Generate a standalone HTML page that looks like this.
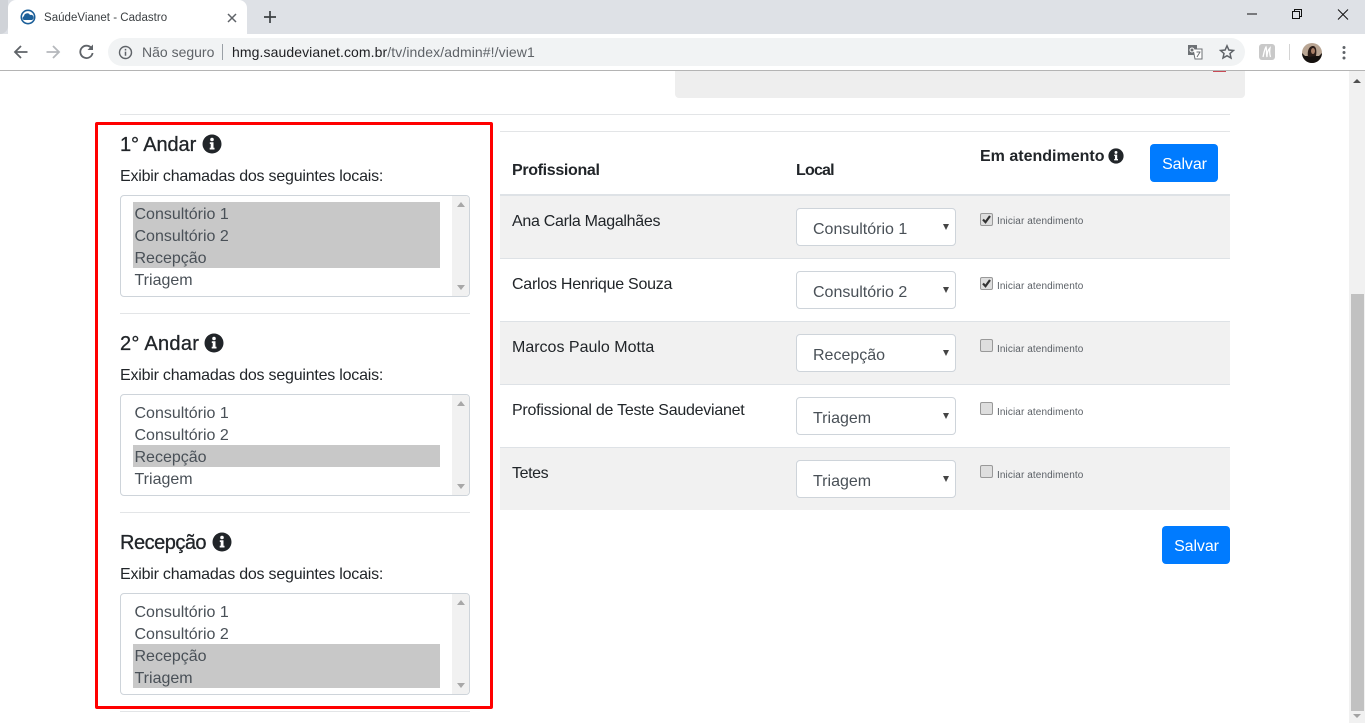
<!DOCTYPE html>
<html lang="pt-BR"><head><meta charset="utf-8"><title>SaúdeVianet - Cadastro</title>
<style>
html,body{margin:0;padding:0;width:1365px;height:723px;overflow:hidden;background:#fff}
body{position:relative;font-family:"Liberation Sans",sans-serif;color:#212529}
.a{position:absolute;white-space:nowrap}
.line{position:absolute;height:1px;background:#e3e5e7}
.h{font-size:20px;line-height:24px;font-weight:400;color:#212529;-webkit-text-stroke:.3px #212529}
.lb{font-size:16px;line-height:20px;left:120px;letter-spacing:-.22px}
.list{position:absolute;left:120px;width:348px;height:100px;border:1px solid #ced4da;border-radius:4px;background:#fff;overflow:hidden}
.list .sb{position:absolute;right:0;top:0;bottom:0;width:17px;background:#f1f1f1}
.list .up{position:absolute;right:4px;top:6px;width:0;height:0;border:4.5px solid transparent;border-top:0;border-bottom:5px solid #a8a8a8}
.list .dn{position:absolute;right:4px;bottom:6px;width:0;height:0;border:4.5px solid transparent;border-bottom:0;border-top:5px solid #a8a8a8}
.opt{position:absolute;left:12px;width:307px;height:22px;line-height:26px;font-size:16px;color:#495057;padding-left:1.500px;box-sizing:border-box}
.sel{background:#c8c8c8}
.row{position:absolute;left:500px;width:730px;height:62px;border-top:1px solid #dee2e6}
.grey{background:#f1f1f1}
.name{position:absolute;left:12px;top:16px;font-size:16px;line-height:20px;color:#212529;white-space:nowrap}
.dd{position:absolute;left:296px;top:12px;width:158px;height:36px;border:1px solid #ced4da;border-radius:4px;background:#fff}
.dd span{position:absolute;left:16px;top:11px;font-size:16px;line-height:20px;color:#495057;white-space:nowrap}
.dd i{position:absolute;right:6px;top:15px;width:0;height:0;border:3px solid transparent;border-bottom:0;border-top:6px solid #444}
.cb{position:absolute;left:480px;top:17px;width:11px;height:11px;border:1px solid #999;border-radius:2px;background:#dedede}
.cb svg{position:absolute;left:0;top:0}
.ck{position:absolute;left:497px;top:21px;font-size:10px;line-height:14px;color:#5b6066;white-space:nowrap;letter-spacing:.1px}
.btn{position:absolute;background:#007bff;color:#fff;border-radius:4px;width:68px;height:38px;line-height:41px;text-align:center;font-size:16px;letter-spacing:-.1px;text-indent:1px}
.info{position:absolute}
.b{font-weight:700;font-size:16px;line-height:20px;color:#212529}
</style></head><body>

<!-- browser chrome -->
<div class="a" style="left:0;top:0;width:1365px;height:34px;background:#dee1e6"></div>
<div class="a" style="left:0;top:0;width:8px;height:34px;background:#d0d3d8;border-bottom-right-radius:8px"></div>
<div class="a" style="left:8px;top:0;width:239px;height:34px;background:#fff;border-radius:8px 8px 0 0"></div>
<svg class="a" style="left:19px;top:8px" width="18" height="18" viewBox="0 0 18 18"><circle cx="9" cy="9" r="6.700" fill="#fff" stroke="#1c5f99" stroke-width="1.600"/><path d="M5 12a2 2 0 0 1 0-3.800A3.200 3.200 0 0 1 11 7a2.500 2.500 0 0 1 2 5z" fill="#1c5f99"/></svg>
<div class="a" style="left:44px;top:11px;font-size:11.500px;line-height:14px;color:#3c4043;letter-spacing:.03px">SaúdeVianet - Cadastro</div>
<svg class="a" style="left:226px;top:12px" width="12" height="12" viewBox="0 0 12 12"><path d="M2 2l8 8M10 2l-8 8" stroke="#5f6368" stroke-width="1.500"/></svg>
<svg class="a" style="left:262px;top:9px" width="16" height="16" viewBox="0 0 16 16"><path d="M8 2v12M2 8h12" stroke="#3c4043" stroke-width="1.700"/></svg>
<svg class="a" style="left:1245px;top:8px" width="110" height="14" viewBox="0 0 110 14"><path d="M2 6h10" stroke="#111" stroke-width="1"/><path d="M47.500 3.500h7v7h-7zM49.500 3.500V1.500h7v7h-2" fill="none" stroke="#111"/><path d="M93 1.500l10 10M103 1.500l-10 10" stroke="#111" stroke-width="1"/></svg>

<div class="a" style="left:0;top:34px;width:1365px;height:36px;background:#fff"></div>
<div class="a" style="left:0;top:70px;width:1365px;height:1px;background:#b4b4b4"></div>
<svg class="a" style="left:12px;top:42px" width="90" height="20" viewBox="0 0 90 20"><path d="M15.500 10H3M9 4l-6 6 6 6" fill="none" stroke="#5f6368" stroke-width="1.800"/><path d="M34.500 10H47M41 4l6 6-6 6" fill="none" stroke="#b5b8bc" stroke-width="1.800"/><path d="M79.500 6.200A6.200 6.200 0 1 0 80.600 11" fill="none" stroke="#5f6368" stroke-width="1.800"/><path d="M81 2.500v5.500h-5.500z" fill="#5f6368"/></svg>
<div class="a" style="left:108px;top:38px;width:1137px;height:28px;background:#f1f3f4;border-radius:14px"></div>
<svg class="a" style="left:118px;top:45px" width="15" height="15" viewBox="0 0 15 15"><circle cx="7.500" cy="7.500" r="6" fill="none" stroke="#5f6368" stroke-width="1.400"/><path d="M7.500 6.600v4.200M7.500 3.900v1.600" stroke="#5f6368" stroke-width="1.500"/></svg>
<div class="a" style="left:142px;top:44px;font-size:14px;line-height:17px;color:#5f6368">Não seguro</div>
<div class="a" style="left:222px;top:44px;width:1px;height:16px;background:#9aa0a6"></div>
<div class="a" style="left:232px;top:44px;font-size:14px;line-height:17px;color:#202124;letter-spacing:.09px">hmg.saudevianet.com.br<span style="color:#5f6368">/tv/index/admin#!/view1</span></div>
<svg class="a" style="left:1187px;top:44px" width="16" height="16" viewBox="0 0 16 16"><path d="M1 1h9v10H1z" fill="#6d7175"/><path d="M6 5h9v10H8z" fill="#fff" stroke="#6d7175"/><circle cx="5" cy="6" r="2" fill="none" stroke="#fff"/><path d="M9.500 8h4M10 13l3-5" stroke="#6d7175"/></svg>
<svg class="a" style="left:1219px;top:44px" width="16" height="16" viewBox="0 0 16 16"><path d="M8 1.800l1.900 4.200 4.500.5-3.400 3 1 4.500L8 11.700 4 14l1-4.500-3.400-3 4.500-.5z" fill="none" stroke="#5f6368" stroke-width="1.500"/></svg>
<div class="a" style="left:1259px;top:44px;width:16px;height:16px;background:#c9c9c9;border-radius:3px"></div>
<svg class="a" style="left:1259px;top:44px" width="16" height="16" viewBox="0 0 16 16"><path d="M4 13c1-4 1.500-8 3-10 1 3 0 7 1 10 0-4 1-7 3-9-.5 3-.5 6 .5 9" fill="none" stroke="#fff" stroke-width="1.300"/></svg>
<div class="a" style="left:1289px;top:44px;width:1px;height:16px;background:#d4d4d4"></div>
<svg class="a" style="left:1302px;top:43px" width="20" height="20" viewBox="0 0 20 20"><circle cx="10" cy="10" r="10" fill="#b9a593"/><path d="M0 10a10 10 0 0 0 20 0l-3 3H3z" fill="#15110f"/><path d="M6 14c-1-6 1-11 5-11 3 0 4 4 3 10z" fill="#2b1d18"/><ellipse cx="11" cy="8" rx="2" ry="3" fill="#a87e66"/></svg>
<svg class="a" style="left:1341px;top:45px" width="6" height="16" viewBox="0 0 6 16"><circle cx="3" cy="2.500" r="1.500" fill="#5f6368"/><circle cx="3" cy="7.500" r="1.500" fill="#5f6368"/><circle cx="3" cy="13" r="1.500" fill="#5f6368"/></svg>

<!-- scrollbar -->
<div class="a" style="left:1349px;top:71px;width:16px;height:652px;background:#f1f1f1"></div>
<div class="a" style="left:1351px;top:294px;width:13px;height:417px;background:#c1c1c1"></div>
<div class="a" style="left:1353px;top:79px;width:0;height:0;border:4px solid transparent;border-top:0;border-bottom:4px solid #505050"></div>
<div class="a" style="left:1353px;top:714px;width:0;height:0;border:4px solid transparent;border-bottom:0;border-top:4px solid #a3a3a3"></div>

<!-- top grey box -->
<div class="a" style="left:675px;top:71px;width:570px;height:27px;background:#eee;border-radius:0 0 4px 4px"></div>
<div class="a" style="left:1213px;top:71px;width:13px;height:1px;background:#c94a55"></div>
<div class="line" style="left:120px;top:114px;width:1110px"></div>
<div class="line" style="left:500px;top:131px;width:730px"></div>

<!-- left panel -->
<div class="a" style="left:95px;top:122px;width:392px;height:581px;border:3px solid #f00;border-radius:2px"></div>

<div class="a h" style="left:120px;top:133px;letter-spacing:-.1px">1° Andar</div>
<svg class="info" style="left:202px;top:134px" width="20" height="20" viewBox="0 0 20 20"><circle cx="10" cy="10" r="9.500" fill="#212529"/><circle cx="10" cy="5.500" r="1.800" fill="#fff"/><path d="M7.800 8.300h3.700v5.500h1v1.700H7.700v-1.700h1v-3.800h-.9z" fill="#fff"/></svg>
<div class="a lb" style="top:167px">Exibir chamadas dos seguintes locais:</div>
<div class="list" style="top:195px"><div class="sb"><div class="up"></div><div class="dn"></div></div>
<div class="opt sel" style="top:6px">Consultório 1</div><div class="opt sel" style="top:28px">Consultório 2</div><div class="opt sel" style="top:50px">Recepção</div><div class="opt" style="top:72px">Triagem</div></div>
<div class="line" style="left:120px;top:313px;width:350px"></div>

<div class="a h" style="left:120px;top:332px;letter-spacing:.28px">2° Andar</div>
<svg class="info" style="left:204px;top:333px" width="20" height="20" viewBox="0 0 20 20"><circle cx="10" cy="10" r="9.500" fill="#212529"/><circle cx="10" cy="5.500" r="1.800" fill="#fff"/><path d="M7.800 8.300h3.700v5.500h1v1.700H7.700v-1.700h1v-3.800h-.9z" fill="#fff"/></svg>
<div class="a lb" style="top:366px">Exibir chamadas dos seguintes locais:</div>
<div class="list" style="top:394px"><div class="sb"><div class="up"></div><div class="dn"></div></div>
<div class="opt" style="top:6px">Consultório 1</div><div class="opt" style="top:28px">Consultório 2</div><div class="opt sel" style="top:50px">Recepção</div><div class="opt" style="top:72px">Triagem</div></div>
<div class="line" style="left:120px;top:512px;width:350px"></div>

<div class="a h" style="left:120px;top:531px;letter-spacing:-.5px">Recepção</div>
<svg class="info" style="left:212px;top:532px" width="20" height="20" viewBox="0 0 20 20"><circle cx="10" cy="10" r="9.500" fill="#212529"/><circle cx="10" cy="5.500" r="1.800" fill="#fff"/><path d="M7.800 8.300h3.700v5.500h1v1.700H7.700v-1.700h1v-3.800h-.9z" fill="#fff"/></svg>
<div class="a lb" style="top:565px">Exibir chamadas dos seguintes locais:</div>
<div class="list" style="top:593px"><div class="sb"><div class="up"></div><div class="dn"></div></div>
<div class="opt" style="top:6px">Consultório 1</div><div class="opt" style="top:28px">Consultório 2</div><div class="opt sel" style="top:50px">Recepção</div><div class="opt sel" style="top:72px">Triagem</div></div>
<div class="line" style="left:120px;top:711px;width:350px"></div>

<!-- table -->
<div class="a b" style="left:512px;top:161px;letter-spacing:-.33px">Profissional</div>
<div class="a b" style="left:796px;top:161px;letter-spacing:-.8px">Local</div>
<div class="a b" style="left:980px;top:147px">Em atendimento</div>
<svg class="info" style="left:1108px;top:148px" width="16" height="16" viewBox="0 0 20 20"><circle cx="10" cy="10" r="9.500" fill="#212529"/><circle cx="10" cy="5.500" r="1.800" fill="#fff"/><path d="M7.800 8.300h3.700v5.500h1v1.700H7.700v-1.700h1v-3.800h-.9z" fill="#fff"/></svg>
<div class="btn" style="left:1150px;top:144px">Salvar</div>
<div class="a" style="left:500px;top:194px;width:730px;height:2px;background:#dee2e6"></div>

<div class="row grey" style="top:196px;height:62px;border-top:0"><div class="name" style="letter-spacing:-.3px">Ana Carla Magalhães</div><div class="dd"><span>Consultório 1</span><i></i></div><div class="cb"><svg width="11" height="11" viewBox="0 0 11 11"><path d="M2 5.500l2.500 2.700L9 2" fill="none" stroke="#333" stroke-width="2.200"/></svg></div><div class="ck" style="top:19px">Iniciar atendimento</div></div>
<div class="row" style="top:258px"><div class="name" style="letter-spacing:-.25px">Carlos Henrique Souza</div><div class="dd"><span>Consultório 2</span><i></i></div><div class="cb" style="top:18px"><svg width="11" height="11" viewBox="0 0 11 11"><path d="M2 5.500l2.500 2.700L9 2" fill="none" stroke="#333" stroke-width="2.200"/></svg></div><div class="ck">Iniciar atendimento</div></div>
<div class="row grey" style="top:321px"><div class="name">Marcos Paulo Motta</div><div class="dd"><span>Recepção</span><i></i></div><div class="cb"></div><div class="ck">Iniciar atendimento</div></div>
<div class="row" style="top:384px"><div class="name" style="letter-spacing:-.25px">Profissional de Teste Saudevianet</div><div class="dd"><span>Triagem</span><i></i></div><div class="cb"></div><div class="ck">Iniciar atendimento</div></div>
<div class="row grey" style="top:447px"><div class="name" style="letter-spacing:-.4px">Tetes</div><div class="dd"><span>Triagem</span><i></i></div><div class="cb"></div><div class="ck">Iniciar atendimento</div></div>

<div class="btn" style="left:1162px;top:526px">Salvar</div>
</body></html>
